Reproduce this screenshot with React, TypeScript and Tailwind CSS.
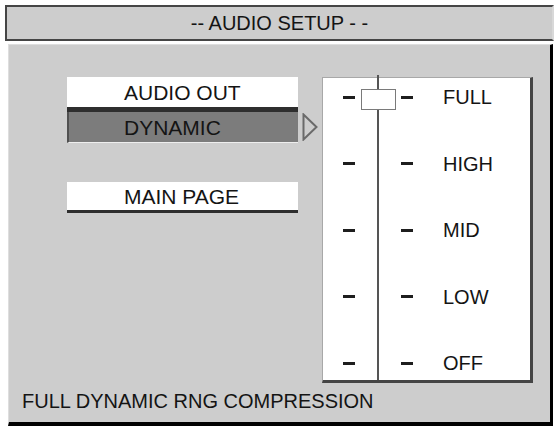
const levels = ['FULL', 'HIGH', 'MID', 'LOW', 'OFF'];

export default function App() {
  return (
    <div
      className="w-[556px] h-[426px] bg-white text-[#141414] overflow-hidden"
      style={{ fontFamily: '"Liberation Sans", Arial, sans-serif' }}
    >
      <div className="pt-[5px] pl-[5px]">
        <div className="w-[549px] h-[36px] bg-[#cdcdcd] border-2 border-[#454545] border-r-[#d8d8d8] flex items-center justify-center text-[20px] leading-none">
          -- AUDIO SETUP - -
        </div>
      </div>

      <div className="mt-[3px] ml-[8px] w-[545px] h-[382px] bg-[#cdcdcd] border-t border-l border-[#dedede] border-r-[3px] border-r-black border-b-[4px] border-b-black flex flex-col">
        <div className="flex pt-[32px] pl-[58px]">
          {/* menu */}
          <div className="w-[231px] flex flex-col">
            <div className="h-[30px] bg-white border-b-[5px] border-[#2e2e2e] box-content flex items-center pl-[57px] text-[21px] leading-none">
              AUDIO OUT
            </div>
            <div className="h-[30px] bg-[#7c7c7c] border-l-2 border-[#505050] border-b border-b-[#eeeeee] box-content flex items-center pl-[55px] text-[21px] leading-none">
              DYNAMIC
            </div>
            <div className="mt-[39px] h-[28px] bg-white border-b-[3px] border-[#2e2e2e] box-content flex items-center pl-[57px] text-[21px] leading-none">
              MAIN PAGE
            </div>
          </div>

          {/* arrow */}
          <div className="w-[24px] flex justify-center pt-[36px]">
            <svg width="16" height="28" viewBox="0 0 16 28" className="block">
              <path d="M1.5 1.5 L14.5 14 L1.5 26.5 Z" fill="none" stroke="#6a6a6a" strokeWidth="2" strokeLinejoin="miter" />
            </svg>
          </div>

          {/* slider */}
          <div className="relative w-[211px] h-[306px] bg-white border-t border-l border-[#a8a8a8] border-r-[3px] border-r-[#454545] border-b-[3px] border-b-[#454545] flex flex-col justify-between pt-[7px] pb-[5px]">
            <div className="absolute left-[54px] top-[-3px] bottom-0 w-[2px] bg-[#555555]" />
            <div className="absolute left-[38px] top-[11px] w-[35px] h-[21px] bg-white border border-[#7a7a7a]" />
            {levels.map((l) => (
              <div key={l} className="relative h-[24px] flex items-center">
                <div className="ml-[20px] w-[12px] h-[3px] bg-[#1e1e1e]" />
                <div className="ml-[46px] w-[12px] h-[3px] bg-[#1e1e1e]" />
                <div className="ml-[30px] text-[20px] leading-none">{l}</div>
              </div>
            ))}
          </div>
        </div>

        <div className="mt-auto mb-[11px] pl-[13px] text-[20px] leading-none">
          FULL DYNAMIC RNG COMPRESSION
        </div>
      </div>
    </div>
  );
}
